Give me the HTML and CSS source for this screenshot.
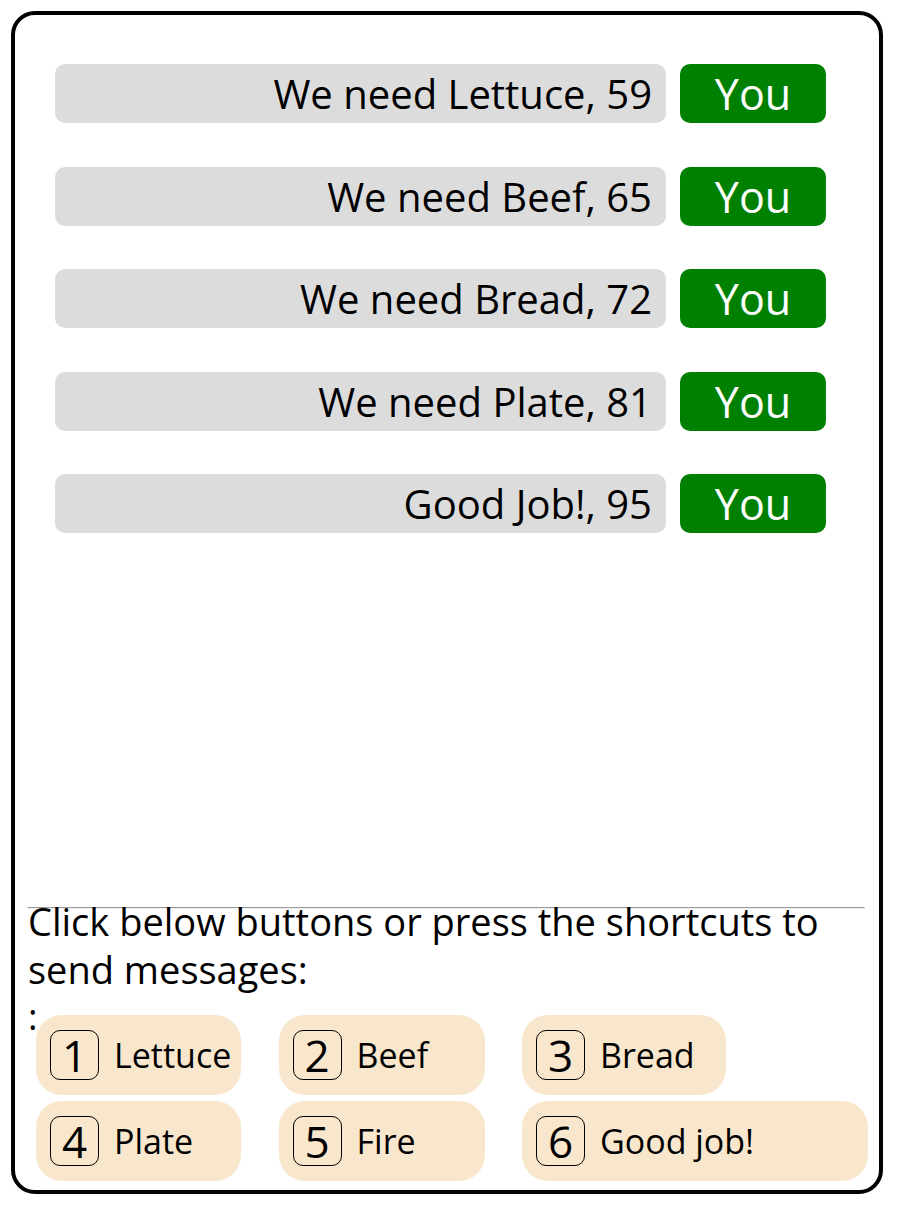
FILE: index.html
```html
<!DOCTYPE html>
<html>
<head>
<meta charset="utf-8">
<link rel="stylesheet" href="styles.css">
</head>
<body>
<div class="frame">
  <div class="chat">
    <div class="row"><div class="msg">We need Lettuce, 59</div><div class="who">You</div></div>
    <div class="row"><div class="msg">We need Beef, 65</div><div class="who">You</div></div>
    <div class="row"><div class="msg">We need Bread, 72</div><div class="who">You</div></div>
    <div class="row"><div class="msg">We need Plate, 81</div><div class="who">You</div></div>
    <div class="row"><div class="msg">Good Job!, 95</div><div class="who">You</div></div>
  </div>
  <div class="controls">
    <hr class="rule">
    <p class="hint">Click below buttons or press the shortcuts to send messages:</p>
    <div class="colon">:</div>
    <div class="keys">
      <div class="btn"><span class="key">1</span><span class="label">Lettuce</span></div>
      <div class="btn"><span class="key">2</span><span class="label">Beef</span></div>
      <div class="btn"><span class="key">3</span><span class="label">Bread</span></div>
      <div class="btn"><span class="key">4</span><span class="label">Plate</span></div>
      <div class="btn"><span class="key">5</span><span class="label">Fire</span></div>
      <div class="btn wide"><span class="key">6</span><span class="label">Good job!</span></div>
    </div>
  </div>
</div>
</body>
</html>
```
FILE: styles.css
```css
html, body {
  margin: 0;
  padding: 0;
  background: #ffffff;
}

body {
  font-family: "Open Sans", "Noto Sans", sans-serif;
  color: #000000;
}

.frame {
  box-sizing: border-box;
  margin: 11px;
  width: 872px;
  height: 1183px;
  border: 4px solid #000000;
  border-radius: 24px;
  display: flex;
  flex-direction: column;
}

.chat {
  flex: 1;
  padding: 49px 53px 0 40px;
  display: flex;
  flex-direction: column;
  gap: 43.5px;
}

.row {
  display: flex;
  gap: 14px;
  height: 59px;
}

.msg {
  flex: 1;
  background: #dcdcdc;
  border-radius: 10px;
  text-align: right;
  padding-right: 14px;
  font-size: 40px;
  line-height: 59px;
  white-space: nowrap;
}

.who {
  width: 146px;
  background: #008000;
  color: #ffffff;
  border-radius: 10px;
  text-align: center;
  font-size: 43px;
  line-height: 59px;
}

.controls {
  padding: 0 14px 9px 13px;
}

.rule {
  margin: 0;
  margin-top: 1px;
}

.hint {
  margin: -12px 0 0 0;
  font-size: 38px;
  line-height: 48px;
}

.colon {
  font-size: 36px;
  line-height: 48px;
}

.keys {
  margin: -26px 0 0 8px;
  display: grid;
  grid-template-columns: 205px 206px 204px;
  column-gap: 37.5px;
  row-gap: 6px;
  justify-items: start;
}

.btn {
  box-sizing: border-box;
  width: 100%;
  height: 80px;
  background: #f8e7cc;
  border-radius: 26px;
  display: flex;
  align-items: center;
  padding-left: 14px;
  gap: 15px;
}

.btn.wide {
  width: 346px;
}

.key {
  box-sizing: border-box;
  width: 49px;
  height: 50px;
  border: 1px solid #000000;
  border-radius: 10px;
  display: flex;
  align-items: center;
  justify-content: center;
  font-size: 44px;
  line-height: 1;
}

.label {
  font-size: 34px;
  line-height: 48px;
  white-space: nowrap;
}
```
